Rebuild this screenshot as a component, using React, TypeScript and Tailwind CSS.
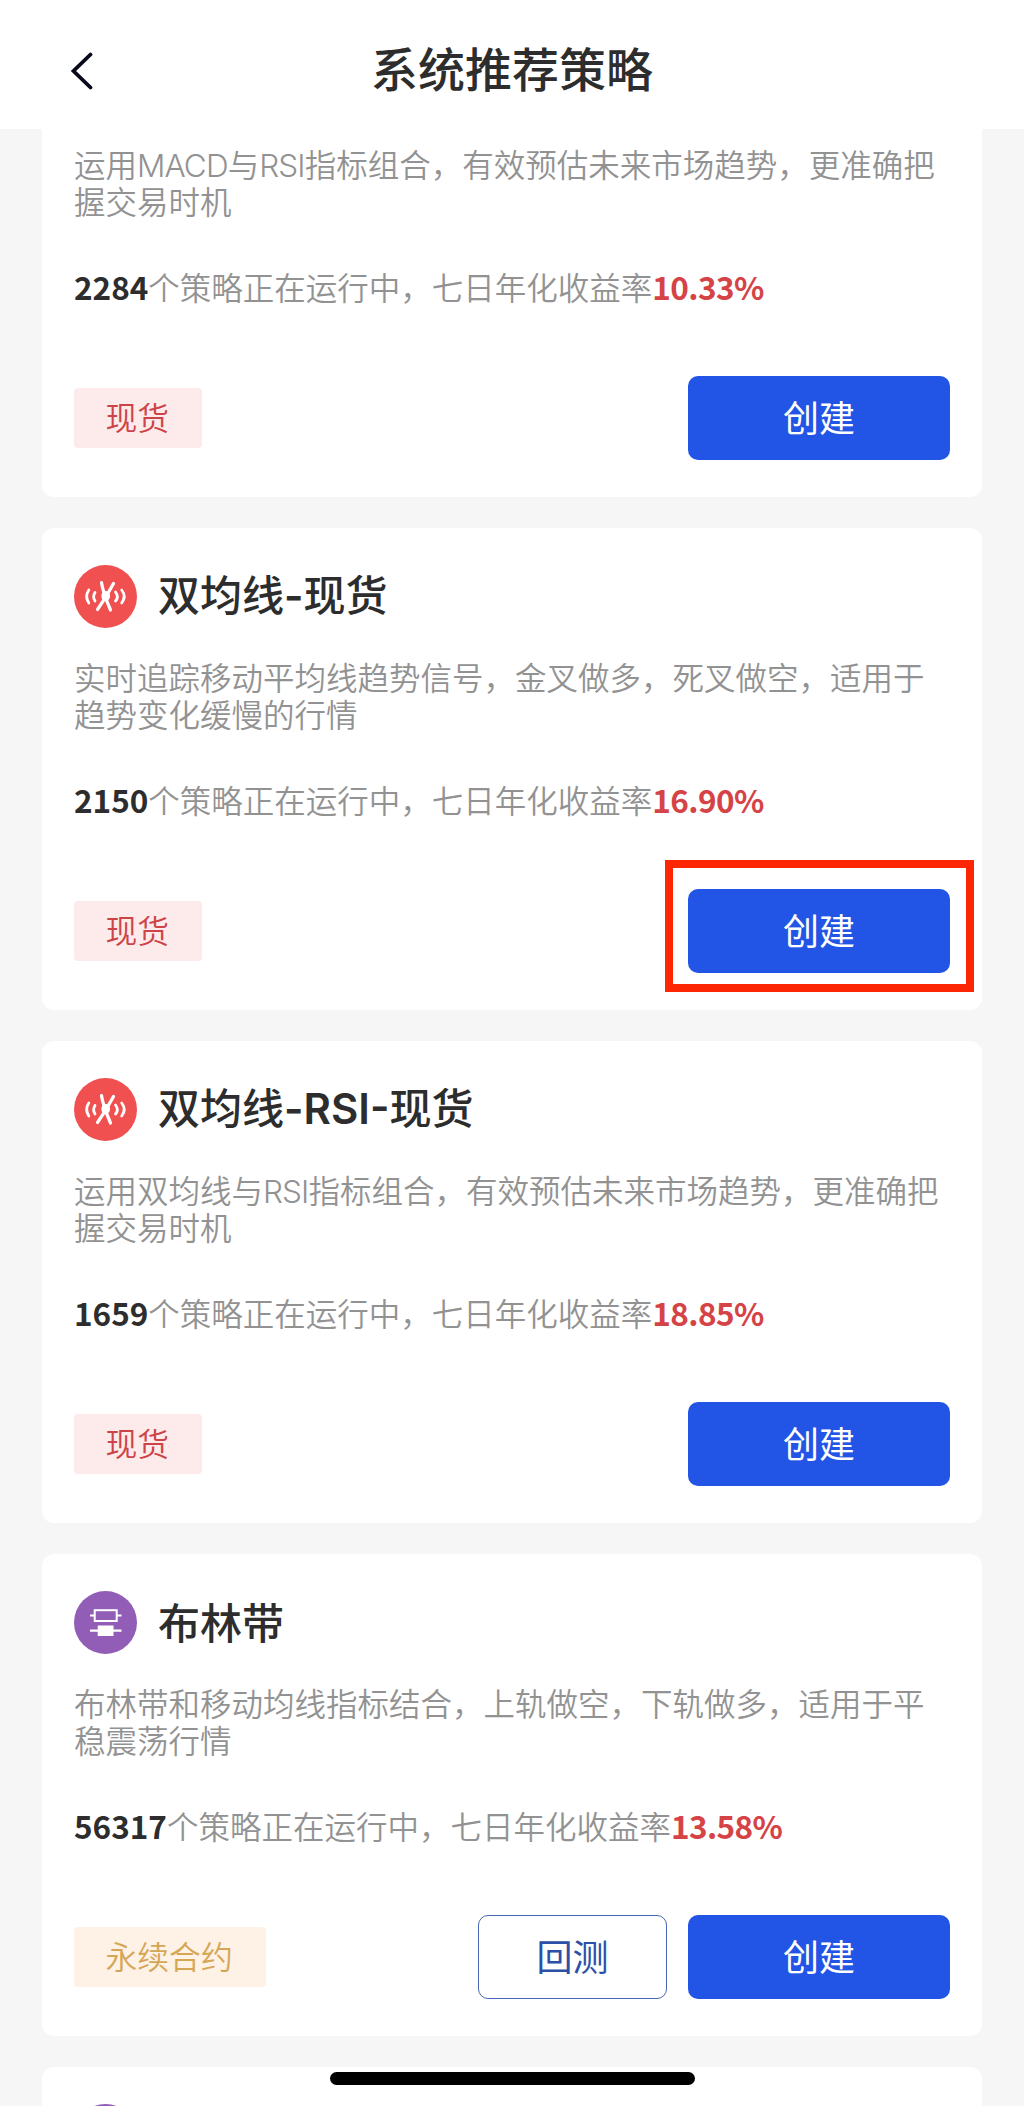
import { clsx } from "clsx"

type Kind = "spot" | "perpetual"

interface Strategy {
  id: number
  title?: string
  icon?: "cross" | "band"
  lines: string[]
  running: string
  rate: string
  kind: Kind
  backtest?: boolean
  highlighted?: boolean
}

const strategies: Strategy[] = [
  {
    id: 1,
    lines: ["运用MACD与RSI指标组合，有效预估未来市场趋势，更准确把", "握交易时机"],
    running: "2284",
    rate: "10.33%",
    kind: "spot"
  },
  {
    id: 2,
    title: "双均线-现货",
    icon: "cross",
    lines: ["实时追踪移动平均线趋势信号，金叉做多，死叉做空，适用于", "趋势变化缓慢的行情"],
    running: "2150",
    rate: "16.90%",
    kind: "spot",
    highlighted: true
  },
  {
    id: 3,
    title: "双均线-RSI-现货",
    icon: "cross",
    lines: ["运用双均线与RSI指标组合，有效预估未来市场趋势，更准确把", "握交易时机"],
    running: "1659",
    rate: "18.85%",
    kind: "spot"
  },
  {
    id: 4,
    title: "布林带",
    icon: "band",
    lines: ["布林带和移动均线指标结合，上轨做空，下轨做多，适用于平", "稳震荡行情"],
    running: "56317",
    rate: "13.58%",
    kind: "perpetual",
    backtest: true
  }
]

function CrossIcon() {
  return (
    <svg viewBox="0 0 63 63" className="size-[63px] shrink-0" fill="none" stroke="white" strokeLinecap="round">
      <circle cx="31.5" cy="31.5" r="31.5" fill="#f05050" stroke="none" />
      <path d="M27.5 17.5C28.5 25 30.5 31 36.5 45" strokeWidth="3.2" />
      <path d="M39.5 18.5C35 27 31 34 23.5 44.5" strokeWidth="3.2" />
      <ellipse cx="31.7" cy="31" rx="4.4" ry="5" fill="white" stroke="none" />
      <path d="M14.8 25C12.2 29 12.2 34 14.8 38M21 27.5C19.4 30 19.4 33.5 21 36" strokeWidth="2.8" />
      <path d="M41.5 27C43.8 30 43.8 33.5 41.5 36M47.7 25C50.8 29 50.8 34 47.7 38" strokeWidth="2.8" />
    </svg>
  )
}

function BandIcon() {
  return (
    <svg viewBox="0 0 63 63" className="size-[63px] shrink-0">
      <circle cx="31.5" cy="31.5" r="31.5" fill="#915db7" />
      <path d="M16 24.5h4M43 24.5h4.5M16 39.7h31.5" stroke="white" strokeWidth="2.2" />
      <rect x="20.7" y="19.2" width="22" height="10.8" fill="none" stroke="white" strokeWidth="2" />
      <rect x="23.7" y="34.5" width="15.8" height="10.5" fill="white" />
    </svg>
  )
}

// Sets the Latin runs of a mixed string in their own face
function MixedText({ text, latinClass }: { text: string; latinClass: string }) {
  return text.split(/([A-Z-]+)/).map((part, i) =>
    i % 2 ? (
      <span key={i} className={latinClass}>
        {part}
      </span>
    ) : (
      part
    )
  )
}

function KindTag({ kind }: { kind: Kind }) {
  return (
    <span
      className={clsx(
        "flex h-[60px] items-center rounded-[4px] pr-[33px] pb-[3px] pl-[31.5px] text-[31.8px] leading-none font-[350]",
        kind === "spot" ? "bg-[#fdeaea] text-[#cd4348]" : "bg-[#fef1e6] text-[#d5a755]"
      )}
    >
      {kind === "spot" ? "现货" : "永续合约"}
    </span>
  )
}

function StrategyCard({ strategy }: { strategy: Strategy }) {
  return (
    <article className={clsx("bg-white px-8 pb-[37px]", strategy.title ? "rounded-xl pt-9" : "rounded-b-xl pt-4")}>
      {strategy.title && (
        <div className="mb-[30px] flex h-[64px] items-center gap-[21px]">
          {strategy.icon === "band" ? <BandIcon /> : <CrossIcon />}
          <h2 className="pb-[3px] text-[42px] leading-none font-medium text-[#2d2d2d]">
            <MixedText text={strategy.title} latinClass="font-[Inter,sans-serif] font-semibold" />
          </h2>
        </div>
      )}
      <p className="text-[31.5px] leading-[37px] font-[350] text-[#929292]">
        {strategy.lines.map(line => (
          <span key={line} className="block h-[37px] whitespace-nowrap">
            <MixedText text={line} latinClass="font-[Inter,sans-serif] tracking-[-0.9px]" />
          </span>
        ))}
      </p>
      <p className="mt-[47px] text-[31.5px] leading-[40px] font-[350] whitespace-nowrap text-[#929292]">
        <b className="font-bold text-[#2d2d2d]">{strategy.running}</b>
        个策略正在运行中，七日年化收益率
        <b className="font-bold tracking-[-0.6px] text-[#d54346]">{strategy.rate}</b>
      </p>
      <div className="mt-[70px] flex h-[84px] items-center">
        <KindTag kind={strategy.kind} />
        <div className="ml-auto flex gap-[21px]">
          {strategy.backtest && (
            <button className="h-[84px] w-[189px] rounded-[10px] border-[1.5px] border-[#4866b4] pb-1 text-[36px] leading-none text-[#2c50a8]">
              回测
            </button>
          )}
          <div className="relative">
            <button className="block h-[84px] w-[262px] rounded-[10px] bg-[#2254e6] pb-1 text-[36px] leading-none text-white">
              创建
            </button>
            {strategy.highlighted && (
              <div className="pointer-events-none absolute -top-[29px] -right-6 h-[132px] w-[309px] border-[8.5px] border-[#fc2605]" />
            )}
          </div>
        </div>
      </div>
    </article>
  )
}

export default function App() {
  return (
    <div className="relative flex h-[2106px] w-[1024px] flex-col overflow-hidden bg-[#f6f6f6] font-['Noto_Sans_CJK_SC',sans-serif]">
      <header className="grid h-[129px] shrink-0 grid-cols-[1fr_auto_1fr] items-center bg-white pt-3">
        <button aria-label="返回" className="ml-[70px] w-fit">
          <svg width="24" height="38" viewBox="0 0 24 38" fill="none" stroke="#08081c" strokeWidth="3.8" strokeLinecap="round">
            <path d="M20.5 2.5L3.5 19L20.5 35.5" />
          </svg>
        </button>
        <h1 className="pb-2 text-[47px] leading-none font-medium text-[#2d2d2d]">系统推荐策略</h1>
      </header>
      <main className="flex flex-col gap-[31px] px-[42px]">
        {strategies.map(strategy => (
          <StrategyCard key={strategy.id} strategy={strategy} />
        ))}
        <article className="h-[200px] shrink-0 rounded-xl bg-white px-8 pt-[37px]">
          <BandIcon />
        </article>
      </main>
      <div className="absolute bottom-[21px] left-[330px] h-[13px] w-[365px] rounded-full bg-black" />
    </div>
  )
}
